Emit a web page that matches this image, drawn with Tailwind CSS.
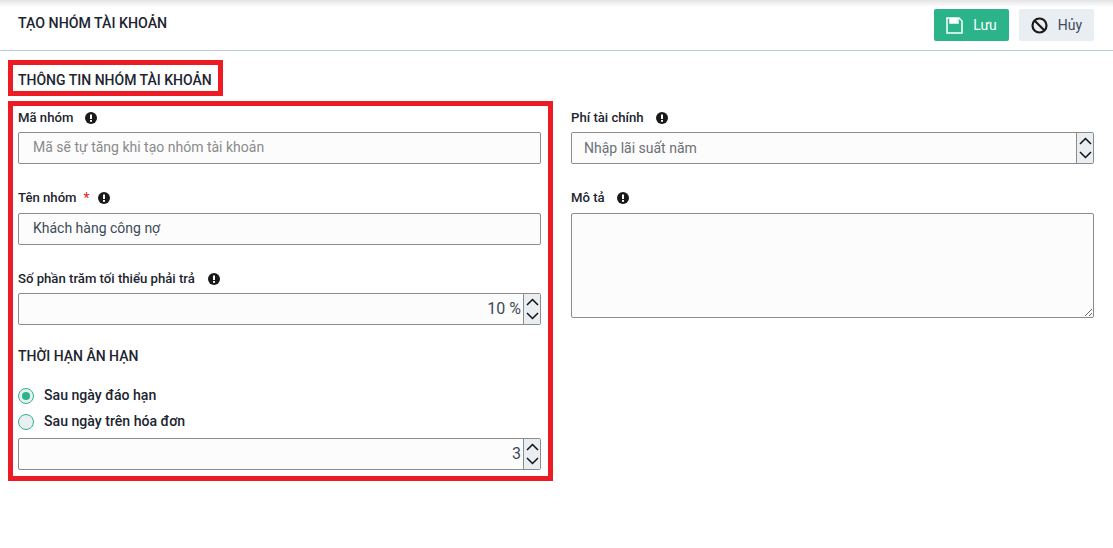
<!DOCTYPE html>
<html lang="en">
<head>
  <meta charset="UTF-8">
  <title>Tạo nhóm tài khoản</title>
  <script src="https://cdn.jsdelivr.net/npm/@tailwindcss/browser@4"></script>
</head>
<body class="relative w-[1113px] h-[548px] overflow-hidden bg-white font-['Roboto',sans-serif] text-[#1c2530]">
  <!-- header -->
  <header class="relative h-[51px] border-b border-[#bccad6] flex items-center justify-between pl-[18px] pr-[19px] bg-gradient-to-b from-[#e4e4e4] via-white via-[14%] to-white">
    <h1 class="text-[14.2px] font-medium -mt-[3px]">TẠO NHÓM TÀI KHOẢN</h1>
    <div class="flex gap-[10px]">
      <button class="w-[75px] h-[32px] rounded-[2px] bg-[#2bb38a] text-white text-[14px] flex items-center justify-center gap-[10px]">
        <svg class="w-[17px] h-[17px]" viewBox="0 0 17 17" fill="none" stroke="white" stroke-width="1.5"><path d="M1 1h12l3 3v12H1z"/><path d="M4 1v5h7.500V1" fill="white" stroke="none"/><path d="M4 1v5h8V1"/></svg>
        <span>Lưu</span>
      </button>
      <button class="w-[75px] h-[32px] rounded-[2px] bg-[#e9eef2] text-[#3c4a57] text-[14px] flex items-center justify-center gap-[10px]">
        <svg class="w-[17px] h-[17px]" viewBox="0 0 17 17" fill="none" stroke="#1a1a1a" stroke-width="2.2"><circle cx="8.500" cy="8.500" r="7"/><path d="M3.500 3.500l10 10"/></svg>
        <span>Hủy</span>
      </button>
    </div>
  </header>

  <h2 class="h-[50px] pt-[20px] pl-[18px] text-[14px] leading-[18px] font-medium">THÔNG TIN NHÓM TÀI KHOẢN</h2>

  <main class="grid grid-cols-[523px_523px] gap-x-[30px] pl-[18px]">
    <!-- left column -->
    <div class="flex flex-col">
      <label class="h-[31px] pt-[2px] flex items-center text-[13.15px] font-medium">Mã nhóm
        <svg class="ml-[12px] w-[12px] h-[12px]" viewBox="0 0 12 12"><circle cx="6" cy="6" r="6" fill="#1a1a1a"/><rect x="5" y="2.500" width="2" height="4.500" fill="white"/><rect x="5" y="8" width="2" height="1.800" fill="white"/></svg>
      </label>
      <div class="h-[32px] pb-[2px] border border-[#8c8c8c] rounded-[2px] bg-[#fcfcfc] pl-[14px] flex items-center text-[14px] text-[#8a8a8a]">Mã sẽ tự tăng khi tạo nhóm tài khoản</div>

      <label class="mt-[17px] h-[32px] pt-[2px] flex items-center text-[13.15px] font-medium">Tên nhóm
        <span class="ml-[7px] text-[#e8202a] text-[14px] font-normal">*</span>
        <svg class="ml-[8px] w-[12px] h-[12px]" viewBox="0 0 12 12"><circle cx="6" cy="6" r="6" fill="#1a1a1a"/><rect x="5" y="2.500" width="2" height="4.500" fill="white"/><rect x="5" y="8" width="2" height="1.800" fill="white"/></svg>
      </label>
      <div class="h-[32px] pb-[2px] border border-[#8c8c8c] rounded-[2px] bg-[#fcfcfc] pl-[14px] flex items-center text-[14px] text-[#3c4a57]">Khách hàng công nợ</div>

      <label class="mt-[17px] h-[31px] pt-[2px] flex items-center text-[13.15px] font-medium">Số phần trăm tối thiểu phải trả
        <svg class="ml-[13px] w-[12px] h-[12px]" viewBox="0 0 12 12"><circle cx="6" cy="6" r="6" fill="#1a1a1a"/><rect x="5" y="2.500" width="2" height="4.500" fill="white"/><rect x="5" y="8" width="2" height="1.800" fill="white"/></svg>
      </label>
      <div class="h-[32px] border border-[#8c8c8c] rounded-[2px] bg-[#fcfcfc] flex text-[16px] text-[#3c4a57]">
        <div class="flex-1 flex items-center justify-end pr-[2px]">10 %</div>
        <div class="w-[17px] border-l border-[#8c8c8c] bg-[#e9eef2] flex flex-col items-center justify-center gap-[6px]">
          <svg class="w-[13px] h-[8px]" viewBox="0 0 13 8" fill="none" stroke="#111" stroke-width="1.500"><path d="M1 7l5.500-5.500L12 7"/></svg>
          <svg class="w-[13px] h-[8px]" viewBox="0 0 13 8" fill="none" stroke="#111" stroke-width="1.500"><path d="M1 1l5.500 5.500L12 1"/></svg>
        </div>
      </div>

      <h3 class="mt-[22px] h-[18px] leading-[18px] text-[14px] font-medium">THỜI HẠN ÂN HẠN</h3>

      <div class="mt-[18px] h-[26px] flex items-center gap-[10px] text-[14.1px] font-medium">
        <span class="w-[16px] h-[16px] -mt-[1px] rounded-full border-[1.5px] border-[#2bb38a] bg-[#e9eef2] flex items-center justify-center"><span class="w-[8px] h-[8px] rounded-full bg-[#2bb38a]"></span></span>
        Sau ngày đáo hạn
      </div>
      <div class="h-[26px] flex items-center gap-[10px] text-[14.1px] font-medium">
        <span class="w-[16px] h-[16px] -mt-[1px] rounded-full border-[1.5px] border-[#2bb38a] bg-[#e9eef2]"></span>
        Sau ngày trên hóa đơn
      </div>

      <div class="mt-[3px] h-[32px] border border-[#8c8c8c] rounded-[2px] bg-[#fcfcfc] flex text-[16px] text-[#3c4a57]">
        <div class="flex-1 flex items-center justify-end pr-[2px]">3</div>
        <div class="w-[17px] border-l border-[#8c8c8c] bg-[#e9eef2] flex flex-col items-center justify-center gap-[6px]">
          <svg class="w-[13px] h-[8px]" viewBox="0 0 13 8" fill="none" stroke="#111" stroke-width="1.500"><path d="M1 7l5.500-5.500L12 7"/></svg>
          <svg class="w-[13px] h-[8px]" viewBox="0 0 13 8" fill="none" stroke="#111" stroke-width="1.500"><path d="M1 1l5.500 5.500L12 1"/></svg>
        </div>
      </div>
    </div>

    <!-- right column -->
    <div class="flex flex-col">
      <label class="h-[31px] pt-[2px] flex items-center text-[13.15px] font-medium">Phí tài chính
        <svg class="ml-[12px] w-[12px] h-[12px]" viewBox="0 0 12 12"><circle cx="6" cy="6" r="6" fill="#1a1a1a"/><rect x="5" y="2.500" width="2" height="4.500" fill="white"/><rect x="5" y="8" width="2" height="1.800" fill="white"/></svg>
      </label>
      <div class="h-[32px] border border-[#8c8c8c] rounded-[2px] bg-[#fcfcfc] flex text-[14px] text-[#6b7075]">
        <div class="flex-1 flex items-center pl-[12px]">Nhập lãi suất năm</div>
        <div class="w-[17px] border-l border-[#8c8c8c] bg-[#e9eef2] flex flex-col items-center justify-center gap-[6px]">
          <svg class="w-[13px] h-[8px]" viewBox="0 0 13 8" fill="none" stroke="#111" stroke-width="1.500"><path d="M1 7l5.500-5.500L12 7"/></svg>
          <svg class="w-[13px] h-[8px]" viewBox="0 0 13 8" fill="none" stroke="#111" stroke-width="1.500"><path d="M1 1l5.500 5.500L12 1"/></svg>
        </div>
      </div>

      <label class="mt-[17px] h-[32px] pt-[2px] flex items-center text-[13.15px] font-medium">Mô tả
        <svg class="ml-[12px] w-[12px] h-[12px]" viewBox="0 0 12 12"><circle cx="6" cy="6" r="6" fill="#1a1a1a"/><rect x="5" y="2.500" width="2" height="4.500" fill="white"/><rect x="5" y="8" width="2" height="1.800" fill="white"/></svg>
      </label>
      <textarea class="block h-[105px] border border-[#8c8c8c] rounded-[2px] bg-[#fcfcfc]"></textarea>
    </div>
  </main>

  <!-- red annotation frames -->
  <div class="absolute left-[8px] top-[60px] w-[215px] h-[36px] border-[5px] border-[#ed1c24]"></div>
  <div class="absolute left-[8px] top-[101px] w-[545px] h-[380px] border-[5px] border-[#ed1c24]"></div>
</body>
</html>
